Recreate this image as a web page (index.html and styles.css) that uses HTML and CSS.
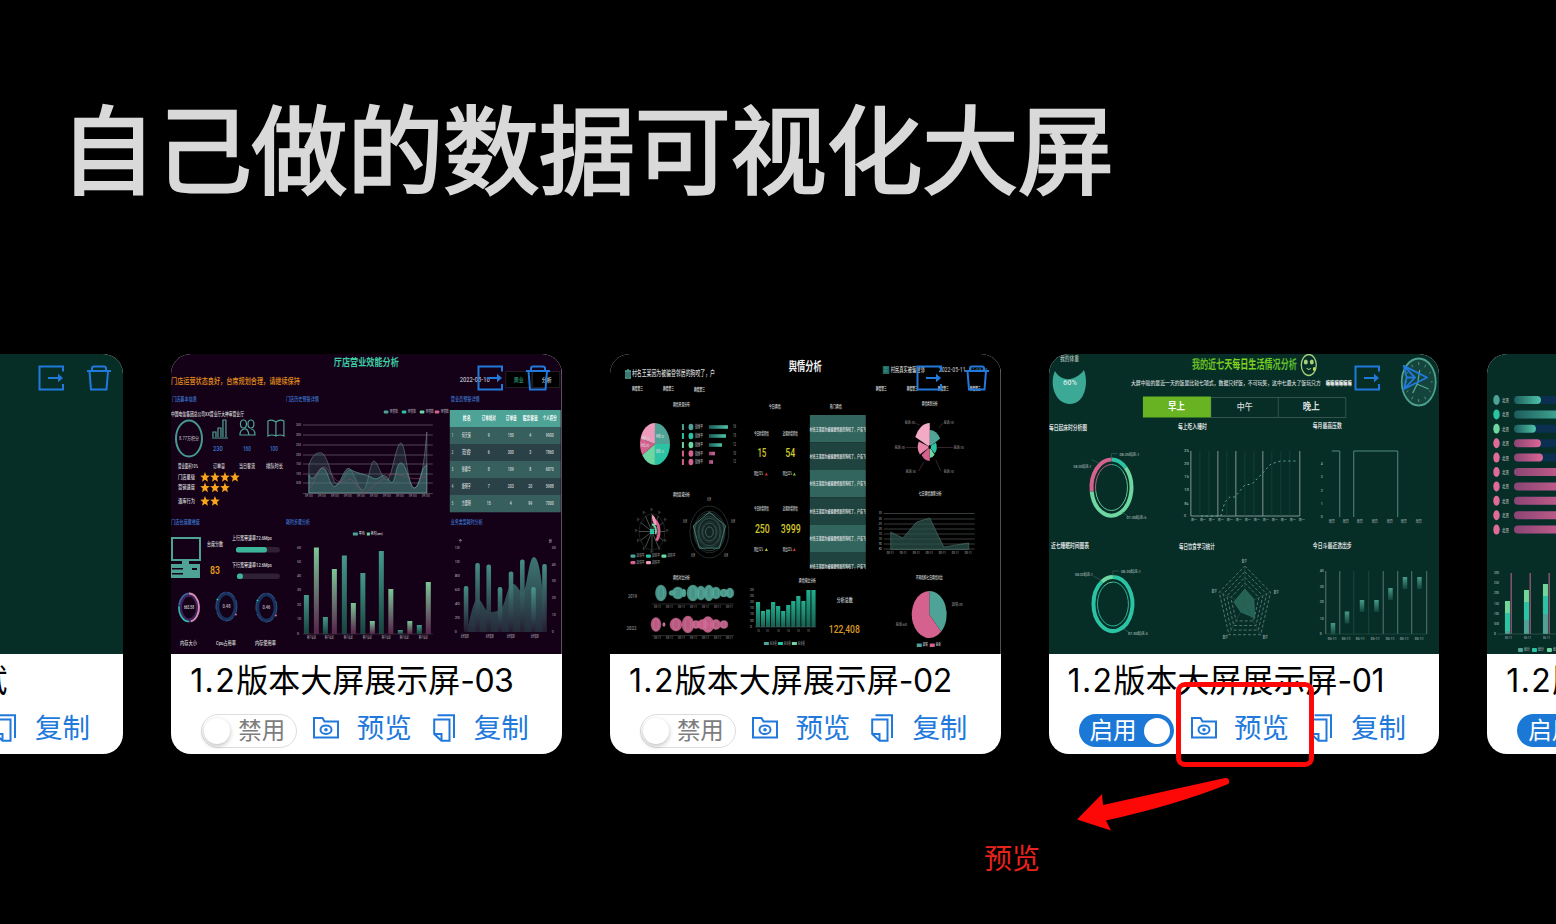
FILE: index.html
```html
<!DOCTYPE html>
<html lang="zh-CN">
<head>
<meta charset="utf-8">
<title>数据可视化大屏</title>
<link rel="stylesheet" href="styles.css">
</head>
<body>
<svg class="defs" width="0" height="0" aria-hidden="true">
  <defs>
    <symbol id="i-export" viewBox="0 0 26 26"><path d="M25 6.500V1.500H1.500v23H25V19M10 13h13"/><path class="solid" d="M20 8.800l5 4.200-5 4.200z"/></symbol>
    <symbol id="i-trash" viewBox="0 0 26 26"><path d="M1 6h24M6 6V3.500Q6 1.500 8 1.500h10q2 0 2 2V6M3.500 6l1.500 18.500h15.500L22 6"/></symbol>
    <symbol id="i-send" viewBox="0 0 28 28"><path d="M2 1l25 12.500L2 26l3-12.500zM5 13.500h9M2 1l12 12.500L2 26"/></symbol>
    <symbol id="i-folder" viewBox="0 0 26 22"><path d="M1 1h8.500l2 3.500H25V20.500H1z"/><ellipse cx="13" cy="12.700" rx="5.500" ry="4.300"/><circle class="solid" cx="13" cy="12.700" r="1.800"/></symbol>
    <symbol id="i-copy" viewBox="0 0 22 28"><path d="M4.500 1.200H21V24M1.200 5.500h15.300v21.300H8.500L1.200 20zM1.200 20h7.300v6.800"/></symbol>
    <linearGradient id="g-teal" x2="0" y2="1"><stop stop-color="#46998c"/><stop offset="1" stop-color="#174440"/></linearGradient>
    <linearGradient id="g-mix" x2="0" y2="1"><stop stop-color="#7bc795"/><stop offset="1" stop-color="#55234a"/></linearGradient>
    <linearGradient id="g-green" x2="0" y2="1"><stop stop-color="#22b08f"/><stop offset="1" stop-color="#175e50"/></linearGradient>
    <linearGradient id="g-fade" x2="0" y2="1"><stop stop-color="#4a9d91"/><stop offset="1" stop-color="#241b31"/></linearGradient>
    <linearGradient id="g-area" x2="0" y2="1"><stop stop-color="#4a9d91"/><stop offset="1" stop-color="#2a3a44"/></linearGradient>
    <linearGradient id="g-candle" x2="0" y2="1"><stop stop-color="#479b89"/><stop offset="1" stop-color="#12453c"/></linearGradient>
    <linearGradient id="h-teal"><stop stop-color="#1d5c5c"/><stop offset="1" stop-color="#4fc5a8"/></linearGradient>
    <linearGradient id="h-pink"><stop stop-color="#8a4573"/><stop offset="1" stop-color="#dc6795"/></linearGradient>
    <linearGradient id="h-lime"><stop stop-color="#62ba22"/><stop offset=".5" stop-color="#84d81d"/><stop offset="1" stop-color="#55b82c"/></linearGradient>
  </defs>
</svg>
<main class="stage">
  <h1 class="headline">自己做的数据可视化大屏</h1>
  <section class="track" id="track"></section>
  <div class="callout-box"></div>
  <svg class="callout-arrow" viewBox="0 0 154 55"><path d="M149 1Q153 .5 153 4 153.500 6.500 151 7.500Q100 28 30 43.500L35 53.500 1 42.500 26 17 27 28Q90 14 149 1z"/></svg>
  <span class="callout-text">预览</span>
</main>
<script src="screens.js"></script>
</body>
</html>
```
FILE: styles.css
```css
* { box-sizing: border-box; }
body { margin: 0; background: #000; font-family: "Inter", "Noto Sans CJK SC", sans-serif; }
.defs { position: absolute; }
.stage { position: relative; width: 1556px; height: 924px; overflow: hidden; }
.headline { margin: 0; padding: 87px 0 0 60px; height: 354px; font: 400 96px/116px "Noto Sans CJK SC", sans-serif; letter-spacing: -0.200px; color: #d9d9d9; -webkit-text-stroke: 2.600px #d9d9d9; white-space: nowrap; }
.track { display: flex; gap: 48px; width: max-content; margin-left: -267.500px; }
.card { position: relative; flex: none; width: 390.700px; height: 400px; border-radius: 20px; background: #fff; overflow: hidden; }
.thumb { display: block; width: 100%; height: 300px; }
.thumb text { font-family: "Roboto", "Noto Sans CJK SC", sans-serif; dominant-baseline: central; }
.tools { position: absolute; top: 11px; right: 11px; display: flex; gap: 22px; }
.icon { display: block; width: 26px; height: 26px; fill: none; stroke: #2179dc; stroke-width: 2; color: #2179dc; }
.icon .solid, .solid { fill: #2179dc; stroke: none; }
.icon.folder { width: 26px; height: 22px; margin: 0 17.500px 0 16px; }
.icon.copy { width: 22px; height: 28px; margin: 0 19px 0 21px; }
.name { height: 52px; padding-left: 19px; font-size: 32px; line-height: 53px; color: #000; white-space: nowrap; }
.version { letter-spacing: 1.400px; }
.number { letter-spacing: -0.500px; }
.actions { display: flex; align-items: center; height: 43px; padding-left: 30px; white-space: nowrap; }
.action { font-size: 27.500px; line-height: 36px; color: #2179dc; }
.toggle { display: flex; align-items: center; width: 96px; height: 34px; margin-top: 6px; border: 1px solid #ddd; border-radius: 17px; font-size: 23.500px; line-height: 32px; color: #7d7d7d; background: #fff; }
.knob { flex: none; width: 26px; height: 26px; border-radius: 50%; background: #fff; }
.off .knob { margin: 0 8px 0 2px; box-shadow: 0 2px 5px rgba(0,0,0,.25); }
.on { flex-direction: row-reverse; justify-content: flex-start; width: 95px; height: 33px; margin-right: 1px; border: 0; padding: 0 4px; color: #fff; background: #1c78d7; }
.on .knob { margin-left: 7px; }
.callout-box { position: absolute; left: 1176px; top: 682px; width: 138px; height: 85px; border: 5px solid #fe0707; border-radius: 9px; }
.callout-arrow { position: absolute; left: 1076px; top: 777px; width: 154px; height: 55px; fill: #fe0707; }
.callout-text { position: absolute; left: 984px; top: 839px; font-size: 28px; line-height: 40px; color: #e8221c; }
```
FILE: screens.js
```js
const P = '#d5618f', G = '#6ed6a0', A = '#4fa396', B = '#2bc3a4', W = '#d7dbdb';
const T = (x, y, s, w, c = W, z = 5.5, b = 500) =>
  `<text x="${x}" y="${y}" font-size="${z}" fill="${c}" font-weight="${b}" textLength="${w}" lengthAdjust="spacingAndGlyphs">${s}</text>`;
const R = (x, y, w, h, c, r = 0, o = 1) => `<rect x="${x}" y="${y}" width="${w}" height="${h}" rx="${r}" fill="${c}" opacity="${o}"/>`;
const E = (x, y, rx, ry, c, s = 'none', w = 1, more = '') => `<ellipse cx="${x}" cy="${y}" rx="${rx}" ry="${ry}" fill="${c}" stroke="${s}" stroke-width="${w}" ${more}/>`;
const L = (d, c, w = 1, f = 'none', more = '') => `<path d="${d}" stroke="${c}" stroke-width="${w}" fill="${f}" ${more}/>`;
const many = (a, f) => a.map(f).join('');
const point = (x, y, rx, ry, deg) => {
  const t = deg * Math.PI / 180;
  return (x + rx * Math.sin(t)).toFixed(1) + ' ' + (y - ry * Math.cos(t)).toFixed(1);
};
const slice = (x, y, rx, ry, a, b, c) =>
  L(`M${x} ${y}L${point(x, y, rx, ry, a)}A${rx} ${ry} 0 ${b - a > 180 ? 1 : 0} 1 ${point(x, y, rx, ry, b)}Z`, 'none', 0, c);
const arc = (x, y, rx, ry, a, b, c, w) =>
  L(`M${point(x, y, rx, ry, a)}A${rx} ${ry} 0 ${b - a > 180 ? 1 : 0} 1 ${point(x, y, rx, ry, b)}`, c, w);
const poly = (x, y, rx, ry, c, w, f = 'none', more = '') =>
  L('M' + [0, 72, 144, 216, 288].map(a => point(x, y, rx, ry, a)).join('L') + 'Z', c, w, f, more);

function storeScreen() {
  const star = (x, y) => L(`M${x} ${y - 5}l1.300 3.400 3.500.3-2.700 2.300.9 3.800-3-2-3 2 .9-3.800-2.700-2.300 3.500-.3z`, 'none', 0, '#f7a51d');
  let s = R(171, 354, 391, 300, '#150117');
  s += T(334, 363, '厅店营业效能分析', 65, '#3dcda4', 10.5, 700);
  s += T(171, 381, '门店运营状态良好，台席规划合理，请继续保持', 129, '#e08f1c', 8.5, 500);
  s += T(172, 399, '门店基本信息', 25, '#3a76d0', 6) + T(286, 399, '门店历史预警详情', 33, '#3a76d0', 6) + T(451, 399, '营业员预警详情', 29, '#3a76d0', 6);
  s += T(171, 414.5, '中国电信集团总公司XX营业厅大神审营业厅', 73);
  s += E(189, 438.5, 13, 18, 'none', '#469890', 2) + T(179, 439, '8.77万积分', 20, '#a9a9b3', 4.5);
  s += L('M212 438h16M213 437v-5h3v5M218 437v-9h3v9M223 437v-17h3v17', A, 1.200);
  s += E(243.5, 424, 3, 4, 'none', A, 1.2) + E(251, 424, 3, 4, 'none', A, 1.2) + L('M240 435q0-5 4-6t5 6zM249 435h6q0-6-4-6', A, 1.200);
  s += L('M276 422q-4-3-8-1v15q4-2 8 0 4-2 8 0v-15q-4-2-8 1v14', A, 1.200);
  s += T(213, 449.5, '230', 10, '#3973c8', 6.5) + T(243, 449.5, '160', 8, '#3973c8', 6.5) + T(270, 449.5, '100', 8, '#3973c8', 6.5);
  s += T(178, 466, '营业面积10%', 20) + T(213, 466, '订单量', 12) + T(239, 466, '当日客流', 16) + T(266, 466, '排队时长', 17);
  many([['门店星级', 477, 4], ['营销速度', 487.5, 3], ['清库行为', 501, 2]], ([n, y, k]) => {
    s += T(178, y, n, 17);
    for (let i = 0; i < k; i++) s += star(205 + i * 10, y);
  });
  s += T(460, 380, '2022-05-10', 30, '#b9b9c2', 6.5);
  s += R(506, 371.5, 26, 16, '#000') + R(533, 371.5, 27, 16, '#000') + L('M506 371.500h26v16h-26zM533 371.500h27v16h-27z', '#3f3a3a', .5);
  s += T(514, 380, '周业', 10, '#2f9f78', 6) + T(542, 380, '分析', 10, W, 6);
  many([425, 435, 445, 455, 464, 474, 483], (y, i) => { s += L(`M303 ${y}h130`, '#625767', .8) + T(296, y, (7 - i) * 50, 5, '#99919e', 4); });
  s += L('M309 493V465C313 454 317 452 322 453C329 457 332 483 337 484S346 470 350 470 358 490 363 490 370 461 374 461 382 480 387 480 396 443 401 443 408 488 414 488 424 470 427 432V493Z', '#747d87', .6, '#3f726f', 'fill-opacity=".3"');
  s += L('M309 493V475C314 485 318 468 323 468S330 490 336 486 345 465 350 469 366 474 373 478 382 469 389 480 395 463 401 463 410 489 415 488 421 466 427 465V493Z', '#68a7a0', .6, '#43817b', 'fill-opacity=".5"');
  s += L('M309 489C315 485 317 468 323 467S332 480 340 482 348 472 357 486 370 487 379 482 388 472 400 475 415 481 427 476', '#8a4a68', .6);
  s += L('M303 493.500h130', '#625767', .7);
  many([309, 322, 335, 348, 361, 374, 387, 400, 413, 426], x => { s += T(x - 4, 496.5, '5月10日', 8, '#99919e', 3.5); });
  many([[384, A], [402, B], [420, G], [435, P]], ([x, c]) => { s += R(x, 410.5, 4.500, 3, c, .8) + T(x + 6, 412, '预警数', 8, '#a59eab', 4); });
  many(['#4da396', '#365f5e', '#2a4148', '#365f5e', '#2a4148', '#365f5e'], (c, i) => { s += R(450, i ? 410 + i * 17 : 410, 111, 17.300, c); });
  many([['姓名', 463, 8], ['订单排对', 482, 14], ['订单量', 506, 11], ['服务客量', 523, 15], ['个人积分', 543, 14]], ([n, x, w]) => { s += T(x, 418.5, n, w, '#fff', 5.5, 700); });
  many([['何天保', 9, 150, 4, 9900], ['范睿', 6, 300, 3, 7860], ['徐春华', 8, 109, 8, 6870], ['施明宇', 7, 203, 20, 5988], ['方建明', 15, 4, 99, 7000]], (r, i) => {
    const y = 435.500 + i * 17, mid = (x, v) => T(x - String(v).length, y, v, String(v).length * 2, W, 4.5);
    s += T(452, y, i + 1, 1.5, W, 4.5) + T(462, y, r[0], 9, W, 5.5) + mid(489, r[1]) + mid(511, r[2]) + mid(530.5, r[3]) + mid(550, r[4]);
  });
  s += T(171, 522, '门店台席建维度', 29, '#3a76d0', 6) + T(286, 522, '耗时步骤分析', 24, '#3a76d0', 6) + T(451, 522, '业务类型耗时分析', 32, '#3a76d0', 6);
  s += L('M172 538h28v22h-28z', A, 2) + R(182, 560, 7, 4, A) + R(171, 564, 29, 14, A) + R(172, 568, 11, 1.500, '#150117') + R(172, 573, 11, 1.5, '#150117') + R(192, 568, 5, 2, '#150117');
  s += T(207, 544, '台席分数', 16) + T(210, 571, '83', 10, '#e9a11d', 10, 500);
  s += T(232, 538.5, '上行宽带速率72.6Mps', 40) + R(236, 547, 44, 5.500, '#302033', 2.500) + R(236, 547, 31, 5.500, '#3cb59b', 2.500);
  s += T(232, 565.5, '下行宽带速率12.6Mps', 40) + R(237, 573.500, 43, 5.500, '#302033', 2.500) + R(237, 573.500, 6, 5.500, '#3cb59b', 2.500);
  s += E(189, 607.5, 9, 13, 'none', '#3c235d', 4) + arc(189, 607.5, 10, 14, 0, 170, '#de8fb0', 1.8) + arc(189, 607.5, 10, 14, 180, 275, B, 1.500) + arc(189, 607.5, 10, 14, 280, 360, '#37689c', 1.5) + T(184, 607.5, '663.58', 10, W, 4.5);
  many([[226.5, 606.5, '0.48'], [266.5, 607.5, '0.46']], ([x, y, v]) => { s += E(x, y, 9, 13, 'none', '#18315d', 3.5) + E(x, y, 10.5, 14.5, 'none', '#3a5b8d', .7, 'stroke-dasharray="9 3"') + E(x + 9.5, y + 8, 1, 1, P) + E(x - 9, y - 7, 1, 1, B) + T(x - 4, y, v, 8, '#bcb6c4', 4.5); });
  s += T(180, 643.5, '内存大小', 17) + T(216, 643.5, 'Cpu占用率', 20) + T(255, 643.5, '内存使用率', 21);
  many([[304, 595], [314, 547.5], [323, 617], [332, 569], [342, 555.5], [351, 603], [360.5, 573], [370, 621], [379, 551], [388.5, 589], [398, 630], [407.5, 621], [417, 625], [426, 582]], ([x, y], i) => { s += R(x, y, 5, 634 - y, `url(#${i % 2 ? 'g-mix' : 'g-teal'})`); });
  s += L('M303 634h130', '#4a3c4e', .6);
  many([547, 561.5, 576, 590, 605, 619, 634], (y, i) => { s += T(297, y, (6 - i) * 10, i == 6 ? 2 : 4, '#99919e', 4); });
  many([307, 325, 344, 363, 382, 400, 419], x => { s += T(x, 638, '客户认证', 9, '#a9a1ad', 4); });
  s += R(353, 532.500, 5, 3, A) + T(359, 534, '平均', 6, W, 4) + R(367, 532.5, 3, 3, G) + T(371, 534, '耗时(sec)', 12, W, 4);
  s += L('M467 632C471 615 474 599 478 599S485 612 490 612 500 611 503 606 508 584 513 584 519 592 523 592 529 557 534 557 541 575 543 590L547 632Z', 'none', 0, 'url(#g-area)', 'opacity=".75"');
  many([[464, 586], [475.5, 563], [486.7, 564.5], [498, 587], [509, 571.5], [520.3, 559.5], [531.5, 587], [542.5, 564]], ([x, y]) => { s += R(x, y, 4.600, 632 - y, 'url(#g-fade)', 2, .9); });
  many([548, 562, 576, 590, 604, 618, 632], (y, i) => { s += T(455, y, (6 - i) * 20, i == 6 ? 2 : 5, '#99919e', 4); });
  many([548, 565, 581, 598, 615, 632], (y, i) => { s += T(552, y, (5 - i) * 10, i == 5 ? 2 : 4, '#99919e', 4); });
  many([461, 486, 507, 531], x => { s += T(x, 636.5, '业务变更', 8, '#a9a1ad', 4); });
  return s + T(459, 542, '个', 3, W, 4) + T(549, 542, '分', 3, W, 4);
}

function opinionScreen() {
  let s = R(610, 354, 391, 300, '#000');
  s += T(789, 367, '舆情分析', 33, '#f3f3f3', 12, 700);
  s += L('M625 371h6M626 371v7M630 371v7M625 378h6M628 369v8', A, 1.500) + T(632, 374, '村名王某因为被骗登邻居的狗咬了，户', 83, W, 7.5);
  s += R(883, 366, 6.500, 8, '#286b60') + L('M884.500 368h3M884.500 371h3', B, .7) + T(891, 370, '村民真实被骗登邻', 34, W, 7) + T(939, 370, '2022-05-11', 27, '#aaa', 7) + T(970, 370, '11:58:05', 18, '#40698e', 6);
  many([632, 663, 694, 876, 907, 938, 970], (x, i) => { s += T(x, i == 2 ? 389 : 388, '舆情警三', 11, W, 5, 700); });
  many([[673, 404, '舆情来源分布', 17], [769, 406, '今日舆情', 12], [830, 406, '热门舆情', 12], [922, 403, '舆情类别分析', 16], [673, 494, '舆情区域分析', 17], [919, 493.5, '七日舆情趋势分析', 23], [673, 577, '舆情对比分析', 17], [799, 580, '舆情排比分析', 17], [916, 577, '不同机构七日舆情对比', 27]], ([x, y, n, w]) => { s += T(x, y, n, w, W, 5); });
  many([[0, 90, A], [90, 180, B], [180, 238, G], [238, 285, P], [285, 360, '#ee9abb']], ([a, b, c]) => { s += slice(655, 444, 15, 21, a, b, c); });
  s += T(656, 437, '网络:20', 8, W, 4) + T(656, 452, '媒体:15', 8, W, 4) + T(642, 439, '邮件:15', 8, W, 4) + T(641, 446, '电话:20', 8, W, 4);
  many([[427, 19, A, 'teal', 16], [436, 17, B, 'teal', 15], [445, 13, G, 'teal', 12], [453.5, 6, P, 'pink', 10], [462, 4, P, 'pink', 12]], ([y, w, c, g, v]) => {
    s += R(682, y - 3, 2, 6, c, .5) + E(691, y, 2.400, 3.200, c) + T(695, y, '微博平', 8, '#aaa', 4.5) + R(709, y - 1.800, w, 3.600, `url(#h-${g})`) + T(733, y, v, 3, '#888', 4.5);
  });
  many([[434, 453, 474, '15', '54'], [509, 529, 549.5, '250', '3999']], ([a, b, c, m, n]) => {
    s += T(754, a, '今日新增舆情', 15, W, 4.5) + T(783, a, '近期新增舆情', 15, W, 4.5);
    s += T(m == '15' ? 757.5 : 755, b, m, m == '15' ? 9 : 15, '#cfc52d', 12) + T(m == '15' ? 785.5 : 781, b, n, m == '15' ? 10 : 20, '#cfc52d', 12);
    s += T(754, c, '同比12%', 9, W, 4.5) + T(783, c, '同比22%', 9, W, 4.5) + L(`M765 ${c + 1.500}h3l-1.500-3z`, 'none', 0, m == '15' ? '#e32828' : '#b4c728') + L(`M793 ${c + 1.500}h3l-1.500-3z`, 'none', 0, m == '15' ? '#72c728' : '#e32828');
  });
  s += E(652, 532, 13, 18, 'none', '#303535', .6);
  for (let a = 0; a < 360; a += 30) s += L(`M652 531.500L${point(652, 531.5, 13, 18, a)}`, '#62706e', .7) + T(650.5 + 15.500 * Math.sin(a * Math.PI / 180), 531 - 21 * Math.cos(a * Math.PI / 180), '周一', 3, '#777', 3);
  s += arc(652, 531.5, 7, 12, 5, 140, P, 3) + arc(652, 531.5, 3.5, 15, 0, 65, '#ee9abb', 3) + arc(652, 531.5, 4, 7, 0, 110, G, 2) + R(650, 529, 4, 5, B);
  many([1, .8, .6, .4, .2], k => { s += E(709.500, 532, 19.500 * k, 26 * k, 'none', '#3b4544', .6); });
  s += poly(709.5, 532, 17, 20, '#4c9388', .8, '#315b56', 'fill-opacity=".4"');
  many([.75, .55, .35, .2], k => { s += E(709.5, 532, 19.5 * k, 25 * k, 'none', '#4a8075', .5); });
  many([[707, 500], [683, 522], [731, 522], [691, 556], [724, 556]], ([x, y]) => { s += T(x, y, '处理', 4, '#888', 4); });
  many([[630.5, 556, A], [646, 556, B], [661.5, 556, G], [630.5, 562.5, P], [646, 562.5, '#ee9abb']], ([x, y, c]) => { s += R(x, y - 1.500, 5, 3.300, c, 1) + T(x + 6, y, '舆情平', 8, '#888', 4); });
  many([415, 442.5, 470, 497.5, 525, 552], (y, i) => { s += R(810, y, 56, i == 5 ? 16 : 27.500, i % 2 ? '#1f433e' : '#31655d') + T(810, i == 5 ? 566.500 : y + 14, '村名王某因为被骗登邻居的狗咬了，户告飞', 56, W, 4.5, 700); });
  many([[0, 60, 12, 17, A], [60, 135, 7, 9, B], [135, 180, 7, 11, G], [180, 235, 10, 14, P], [235, 295, 12, 13, '#e984aa'], [295, 360, 16, 24, '#f2aac5']], ([a, b, x, y, c]) => { s += slice(930, 447, x, y, a, b, c); });
  s += E(930, 447, 1.3, 2, '#000');
  many([[905, 423], [944, 423], [895, 448], [954, 448], [906, 472], [944, 472]], ([x, y]) => { s += T(x, y, '投诉:10', 10, '#8c8c8c', 4); });
  s += L('M915 423l5 2M943 423l-4 5M906 447.500h11M938 447.500h15M919 471l5-9M941 471l-5-11', '#5c3e4c', .6);
  many([513.5, 519, 524, 529, 534, 539, 544, 549], (y, i) => { s += L(`M884 ${y}h91`, '#464b4b', .8) + T(879, y, 35 - i * 5, 3, '#999', 3.5); });
  s += L('M891 532L903 538 917 522 930 518 944 547 956 545 969 543V549.500H891Z', '#53756f', .6, '#2c554e', 'fill-opacity=".7"');
  many([887, 900, 913, 926, 939, 952, 965], x => { s += T(x, 553.5, '05-11', 7, '#999', 3.5); });
  const wave = (y, c, a) => {
    a.forEach(([x, w, h]) => { s += E(x, y, w, h, c, c, .4, 'fill-opacity=".9"') + E(x, y, w * .5, h * .8, 'none', '#7dd0bd', .3); });
    s += L(`M652 ${y + 11}h82`, '#555', .5);
    for (let x = 654; x < 735; x += 12) s += T(x, y + 14, '05-11', 7, '#888', 3.5);
  };
  wave(593, A, [[661, 5.500, 8], [672, 3, 2.500], [678, 6, 6], [684, 2, 4], [693, 6, 8], [701, 5, 7], [709, 5, 8], [716, 5, 6], [724, 4, 4], [730, 4, 5]]);
  wave(624.5, P, [[656, 5, 7], [664, 1.300, 2], [676, 6, 6.500], [688, 6, 8.500], [696, 4, 4], [703, 6, 5], [708, 6, 8], [716, 5, 5], [724, 4, 4]]);
  s += T(628, 596.5, '2019', 9, '#8d8d8d') + T(626.5, 628.5, '2022', 10, '#8d8d8d');
  [602, 611, 609.5, 602, 606, 611, 605, 601, 596, 601, 590, 590].forEach((y, i) => { s += R(756 + i * 5.05, y, 4.200, 627 - y, 'url(#g-green)'); });
  s += L('M755 627h61', '#566', .5);
  many([590, 596, 602, 608, 614, 621, 627], (y, i) => { s += T(750, y, 300 - i * 50, i == 6 ? 2 : 4, '#888', 3.500); });
  many([757, 766, 777, 787, 797, 807], x => { s += T(x, 631, '1日', 3, '#888', 3.5); });
  many([[764, A], [778, B], [792, G]], ([x, c]) => { s += R(x, 642, 5, 3, c) + T(x + 6, 643.5, '投诉量', 7, '#888', 4); });
  s += T(837, 600, '分析总数', 16, W, 6) + T(829, 630, '122,408', 31, '#dc9a25', 10);
  s += slice(929.5, 614.5, 17.5, 23.5, 0, 137, A) + slice(929.5, 614.5, 17.5, 23.5, 137, 360, P) + T(952, 604.5, '舆情:39', 11, '#888', 4) + T(896, 624.5, '投诉:60', 11, '#888', 4);
  return s + R(917, 643.5, 5, 3.5, A) + T(923, 645, '舆情', 5, W, 4) + R(930, 643.5, 5, 3.5, P) + T(936, 645, '投诉', 5, W, 4);
}

function lifeScreen() {
  const N = '#9fb0ac';
  let s = R(1049, 354, 391, 300, '#062e27');
  s += T(1060, 359.5, '我的体重', 19, '#aebcb8', 7);
  s += L('M1055 371C1061 382 1075 382 1084 370C1089 383 1085 404 1070 404S1049 384 1055 371Z', 'none', 0, '#3ca896') + T(1063, 383.5, '60%', 14, '#d9e9e5', 7);
  s += T(1192, 365.5, '我的近七天每日生活情况分析', 105, 'url(#h-lime)', 12, 700);
  s += E(1309, 365, 7.5, 10.5, 'none', '#a5cf7a', 1.3) + E(1306, 362, 2, 2.5, '#a5cf7a') + E(1312, 362, 2, 2.5, '#a5cf7a') + L('M1307 368q2 3 4 0', '#a5cf7a', 1.200) + E(1314.5, 369, 1.5, 2, '#b8e05d');
  s += T(1131, 383, '大屏中验的是近一天的饭是比较七项式，数据只好饭，不可玩笑，这中七最大了饭玩只方', 190, W, 6) + T(1326, 383, '嘛嘛嘛嘛嘛嘛', 26, '#fff', 6, 700);
  s += L('M1211 397.500h135v20h-135zM1278.500 397v20', '#47635e', .7) + R(1143, 396.500, 68, 21, '#67b322');
  s += T(1168, 407, '早上', 17, '#fff', 10, 700) + T(1237, 407, '中午', 16, W, 9) + T(1303, 407, '晚上', 17, W, 10, 700);
  many([[1049, 428, '每日起床时分析图', 38], [1178, 427.5, '每上吃入睡时', 29], [1313, 426.5, '每月最高压数', 29], [1051, 545.5, '近七睡眠时间图表', 38], [1179, 547, '每日饮食学习统计', 36], [1313, 546, '今日斗最近选出步', 39]], ([x, y, n, w]) => { s += T(x, y, n, w, W, 7, 700); });
  many([[1111.5, 487.5, 20, 28, [[0, 45, B], [45, 262, G], [262, 360, P]]], [1113, 604, 19.5, 27, [[0, 325, B], [325, 360, G]]]], ([x, y, rx, ry, a]) => {
    a.forEach(([p, q, c]) => { s += arc(x, y, rx, ry, p, q, c, 4) + arc(x, y, rx - 4, ry - 5, p, q, c, .9); });
    s += L(`M${x} ${y - ry - 1}v-5h6M${x - 12} ${y - 24}l-8-4M${x + 11} ${y + 25}l6 4`, '#35695f', .6);
    s += T(x + 8, y - ry - 5, '08:20起床:1', 20, N, 4) + T(x - 38, y - 23 - (y > 500 ? 6 : -2), '08:20起床:1', 18, N, 4) + T(x + 15, y + 30, '07:30起床:5', 20, N, 4);
  });
  s += L('M1191 451v65h109v-65M1218 451v65M1236 451v65M1263 451v65', '#8fa19e', .9) + L('M1200 451v65M1209 451v65M1227 451v65M1245 451v65M1254 451v65M1272 451v65M1281 451v65M1290 451v65', '#214840', .6);
  s += L('M1201 516L1221 516 1225 502 1230 497 1235 497 1245 485 1252 484 1262 474 1271 464 1281 461H1297', '#65a99b', 1, 'none', 'stroke-dasharray="2 3"');
  many([451, 464, 477, 490, 504, 516], (y, i) => { s += T(1184, y, 25 - i * 5, i == 5 ? 2 : 5, N, 4); });
  for (let x = 1191; x < 1300; x += 9) s += T(x, 520.5, '周一', 6, N, 3.5);
  s += L('M1332 451h8v66M1354 517v-66h44v66', '#528a7f', 1);
  many([464, 477, 491, 504, 517], (y, i) => { s += T(1321, y, 4 - i, 2, N, 4); });
  many([1329, 1343, 1357, 1372, 1387, 1401, 1416], x => { s += T(x, 521.5, '周日', 6, N, 4) + T(x - 1, 638.5, '05-11', 9, N, 4); });
  many([1, .85, .7, .55], k => { s += poly(1245, 604, 27 * k, 38 * k, '#71938c', .7, 'none', 'stroke-dasharray="3 2"'); });
  s += L('M1245 589L1254 599 1255 618 1241 612 1234 602Z', '#347568', .6, '#256354') + L('M1245 566v38M1245 604l26-12M1245 604l16 32M1245 604l-17 32M1245 604l-26-12', '#33584f', .5);
  many([[1242, 562], [1212, 592], [1274, 592.5], [1223, 638], [1263, 638]], ([x, y]) => { s += T(x, y, '数学', 5, N, 4); });
  s += L('M1326 571v63M1340 571v63M1383.500 571v63M1398 571v63M1412 571v63M1427 571v63', '#627e78', .9) + L('M1354 571v63M1369 571v63M1326 634h101', '#294f48', .7);
  many([[1331, 623], [1345, 611.5], [1360, 600], [1374.5, 600], [1388.5, 588], [1403, 577], [1417.5, 577]], ([x, y]) => { s += R(x, y, 4.500, 12, 'url(#g-candle)'); });
  many([571, 587, 602, 619, 634], (y, i) => { s += T(1320, y, 40 - i * 10, i == 4 ? 2 : 4, N, 4); });
  s += E(1419, 382, 17, 23.5, '#14443c', '#4d9f8e', 1.800);
  for (let a = 0; a < 360; a += 30) s += L(`M${point(1419, 382, 14, 20, a)}L${point(1419, 382, 12, 17, a)}`, '#548d80', 1);
  return s + L('M1413 393l5-10 2-13M1417 384l12 5', '#55a896', 1.300);
}

function rankScreen() {
  let s = R(1487, 354, 392, 300, '#062e27');
  [27, 64, 22, 27, 29, 70, 70, 70, 70, 70].forEach((w, i) => {
    const y = 400 + i * 14.400, c = i == 0 ? A : i == 1 ? B : i == 2 ? G : '#df6b98';
    s += R(1514, y - 4, 120, 8, '#0b2f50', 4) + R(1514, y - 4, w, 8, `url(#${i < 3 ? 'h-teal' : 'h-pink'})`, 4) + E(1496.5, y, 3.2, 5, c) + T(1502, y, '北京', 7, '#adbbb7', 5);
  });
  many([[1505, 601], [1524, 590], [1543, 584]], ([x, y]) => {
    s += R(x, y, 5, 14, '#70d69a') + R(x, y + 14, 5, 620 - y, A) + R(x, y + 12, 5, 18, B) + R(x + 5.500, 573, 1.500, 61, '#85556f') + T(x, 638, '05-11', 7, '#9fb0ac', 4);
  });
  s += L('M1498 634h60', '#40655d', .6);
  many([573, 583, 593, 604, 614, 624, 634], (y, i) => { s += T(1494, y, 300 - i * 50, i == 6 ? 2 : 5, '#9fb0ac', 4); });
  many([[1518, A], [1532, B], [1547, G]], ([x, c]) => { s += R(x, 648, 5, 4, c, 1) + T(x + 6, 650, '统计', 6, '#9fb0ac', 4); });
  return s;
}

const use = (id, cls = '') => `<svg class="icon ${cls}"><use href="#i-${id}"/></svg>`;
const release = n => `<span class="version">1.2</span>版本大屏展示屏<span class="number">-${n}</span>`;
const cards = [
  { name: '大屏数据可视测试', on: false, x: -268, art: () => R(-268, 354, 392, 300, '#062e27') },
  { name: release('03'), on: false, x: 171, art: storeScreen },
  { name: release('02'), on: false, x: 610, art: opinionScreen },
  { name: release('01'), on: true, x: 1049, art: lifeScreen, tool: 'send' },
  { name: release('00'), on: true, x: 1487, art: rankScreen }
];
document.getElementById('track').innerHTML = many(cards, c => `
  <article class="card">
    <svg class="thumb" viewBox="${c.x} 354 391 300" preserveAspectRatio="none">${c.art()}</svg>
    <div class="tools">${use('export')}${use(c.tool || 'trash')}</div>
    <div class="name">${c.name}</div>
    <div class="actions">
      <span class="toggle ${c.on ? 'on' : 'off'}"><i class="knob"></i>${c.on ? '启用' : '禁用'}</span>
      ${use('folder', 'folder')}<span class="action">预览</span>${use('copy', 'copy')}<span class="action">复制</span>
    </div>
  </article>`);
```
